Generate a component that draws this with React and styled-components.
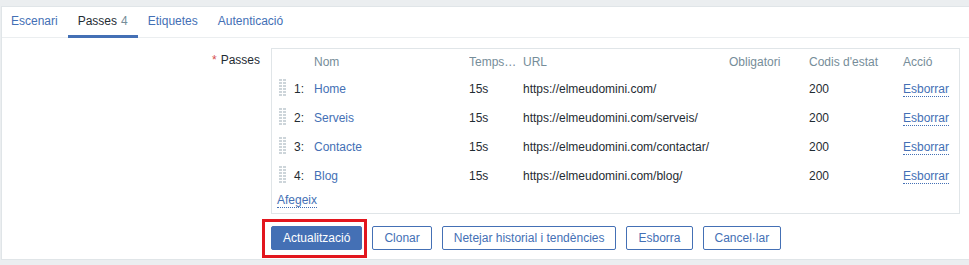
import styled, { createGlobalStyle } from "styled-components";

const Global = createGlobalStyle`
  html, body {
    margin: 0;
    background: #ebeef0;
    font-family: "Liberation Sans", Arial, sans-serif;
    font-size: 12px;
    color: #1f2c33;
  }
`;

const BLUE = "#4470b5";

const Panel = styled.div`
  margin: 6px 0 0 1px;
  background: #fff;
  border: 1px solid #e0e5e8;
  border-right: none;
  padding-bottom: 9px;
`;

const Tabs = styled.div`
  display: flex;
  height: 30px;
  border-bottom: 1px solid #ebeef0;
`;

const Tab = styled.div`
  display: flex;
  align-items: center;
  height: 27px;
  padding: 0 10px 1px;
  margin-bottom: -1px;
  line-height: 14px;
  color: ${(p) => (p.$active ? "#1f2c33" : BLUE)};
  border-bottom: 3px solid ${(p) => (p.$active ? BLUE : "transparent")};
  &:first-child {
    padding-left: 9px;
  }
  .count {
    color: #768d99;
    margin-left: 4px;
  }
`;

const Form = styled.div`
  display: grid;
  grid-template-columns: 258px 1fr;
  column-gap: 11px;
  padding-top: 10px;
`;

const Label = styled.div`
  text-align: right;
  padding-top: 5px;
  line-height: 14px;
  .req {
    color: #d64e4e;
    margin-right: 4px;
  }
`;

const Box = styled.div`
  border: 1px solid #e0e5e8;
  margin-right: 9px;
  padding: 1px 0 3px;
`;

const Row = styled.div`
  display: grid;
  grid-template-columns: 15px 20px 155px 54px 206px 80px 94px 1fr;
  padding-left: 7px;
  height: ${(p) => (p.$head ? "24px" : "29px")};
  align-items: center;
  color: ${(p) => (p.$head ? "#768d99" : "#1f2c33")};
`;

const Cell = styled.div`
  white-space: nowrap;
  overflow: ${(p) => (p.$trim ? "hidden" : "visible")};
  text-overflow: ellipsis;
  padding-right: ${(p) => (p.$trim ? "6px" : "0")};
`;

const Link = styled.span`
  color: ${BLUE};
  border-bottom: ${(p) => (p.$dotted ? `1px dotted ${BLUE}` : "none")};
  cursor: pointer;
`;

const AddRow = styled.div`
  padding-left: 5px;
  height: 20px;
  display: flex;
  align-items: center;
`;

const Buttons = styled.div`
  grid-column: 2;
  display: flex;
  gap: 10px;
  margin-top: 12px;
`;

const Button = styled.button`
  font-family: inherit;
  font-size: 12px;
  height: 24px;
  padding: 0 11px;
  border-radius: 2px;
  border: 1px solid ${BLUE};
  background: ${(p) => (p.$primary ? BLUE : "#fff")};
  color: ${(p) => (p.$primary ? "#fff" : BLUE)};
  cursor: pointer;
`;

const Highlight = styled.div`
  position: relative;
  display: flex;
  &::after {
    content: "";
    position: absolute;
    inset: -7px -5px -8px -9px;
    border: 3px solid #e2161e;
    pointer-events: none;
  }
`;

const Handle = () => (
  <svg width="7" height="17" viewBox="0 0 7 17">
    {[0, 3, 6, 9, 12, 15].map((y) =>
      [0, 4].map((x) => (
        <rect key={`${x}-${y}`} x={x} y={y} width="3" height="2" fill="#cdd5da" />
      ))
    )}
  </svg>
);

const steps = [
  { name: "Home", url: "https://elmeudomini.com/" },
  { name: "Serveis", url: "https://elmeudomini.com/serveis/" },
  { name: "Contacte", url: "https://elmeudomini.com/contactar/" },
  { name: "Blog", url: "https://elmeudomini.com/blog/" },
];

export default function App() {
  return (
    <>
      <Global />
      <Panel>
        <Tabs>
          <Tab>Escenari</Tab>
          <Tab $active>
            Passes<span className="count">4</span>
          </Tab>
          <Tab>Etiquetes</Tab>
          <Tab>Autenticació</Tab>
        </Tabs>
        <Form>
          <Label>
            <span className="req">*</span>Passes
          </Label>
          <Box>
            <Row $head>
              <Cell />
              <Cell />
              <Cell>Nom</Cell>
              <Cell $trim>Temps d'espera</Cell>
              <Cell>URL</Cell>
              <Cell>Obligatori</Cell>
              <Cell>Codis d'estat</Cell>
              <Cell>Acció</Cell>
            </Row>
            {steps.map((s, idx) => (
              <Row key={idx}>
                <Cell>
                  <Handle />
                </Cell>
                <Cell>{idx + 1}:</Cell>
                <Cell>
                  <Link>{s.name}</Link>
                </Cell>
                <Cell>15s</Cell>
                <Cell>{s.url}</Cell>
                <Cell />
                <Cell>200</Cell>
                <Cell>
                  <Link $dotted>Esborrar</Link>
                </Cell>
              </Row>
            ))}
            <AddRow>
              <Link $dotted>Afegeix</Link>
            </AddRow>
          </Box>
          <Buttons>
            <Highlight>
              <Button $primary>Actualització</Button>
            </Highlight>
            <Button>Clonar</Button>
            <Button>Netejar historial i tendències</Button>
            <Button>Esborra</Button>
            <Button>Cancel·lar</Button>
          </Buttons>
        </Form>
      </Panel>
    </>
  );
}
